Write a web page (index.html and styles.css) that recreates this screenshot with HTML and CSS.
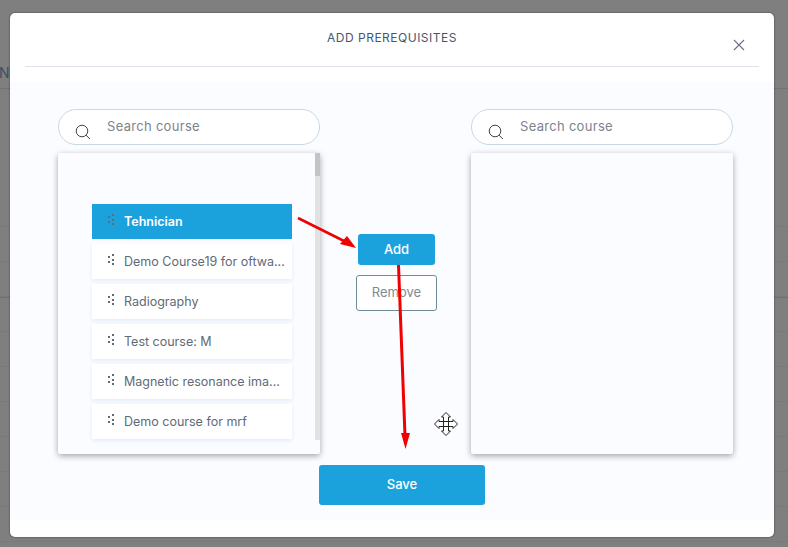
FILE: index.html
```html
<!DOCTYPE html>
<html lang="en">

<head>
    <meta charset="UTF-8">
    <meta name="viewport" content="width=device-width, initial-scale=1.0">
    <title>Add prerequisites</title>
    <link rel="stylesheet" href="styles.css">
</head>

<body>
    <!-- page behind the modal -->
    <div class="backdrop">
        <span class="backdrop-letter">N</span>
        <div class="backdrop-line line-top"></div>
        <div class="backdrop-line line-heavy"></div>
        <div class="backdrop-rows"></div>
    </div>

    <div class="modal">
        <div class="modal-header">
            <h2>ADD PREREQUISITES</h2>
            <svg class="close-icon" width="12" height="12" viewBox="0 0 12 12">
                <path d="M1 1L11 11M11 1L1 11" stroke="#6a7280" stroke-width="1.1" fill="none" />
            </svg>
        </div>

        <div class="modal-body">
            <div class="columns">
                <div class="column">
                    <div class="search">
                        <svg class="search-icon" width="16" height="16" viewBox="0 0 16 16">
                            <circle cx="7" cy="7" r="5.8" stroke="#444" stroke-width="1" fill="none" />
                            <path d="M11 11.2L15 15" stroke="#444" stroke-width="1" fill="none" />
                        </svg>
                        <span>Search course</span>
                    </div>
                    <div class="panel">
                        <div class="scrollbar"><div class="scroll-thumb"></div></div>
                        <ul class="course-list">
                            <li class="course active"><i class="grip"></i><span>Tehnician</span></li>
                            <li class="course"><i class="grip"></i><span>Demo Course19 for oftwa...</span></li>
                            <li class="course"><i class="grip"></i><span>Radiography</span></li>
                            <li class="course"><i class="grip"></i><span>Test course: M</span></li>
                            <li class="course"><i class="grip"></i><span>Magnetic resonance ima...</span></li>
                            <li class="course"><i class="grip"></i><span>Demo course for mrf</span></li>
                        </ul>
                    </div>
                </div>

                <div class="actions">
                    <button class="btn-add">Add</button>
                    <button class="btn-remove">Remove</button>
                </div>

                <div class="column">
                    <div class="search">
                        <svg class="search-icon" width="16" height="16" viewBox="0 0 16 16">
                            <circle cx="7" cy="7" r="5.8" stroke="#444" stroke-width="1" fill="none" />
                            <path d="M11 11.2L15 15" stroke="#444" stroke-width="1" fill="none" />
                        </svg>
                        <span>Search course</span>
                    </div>
                    <div class="panel"></div>
                </div>
            </div>
            <button class="btn-save">Save</button>
        </div>
    </div>

    <!-- annotation arrows drawn on top of the screenshot -->
    <svg class="annotations" width="788" height="547" viewBox="0 0 788 547">
        <path d="M298 218L346 242" stroke="#f00000" stroke-width="2.6" fill="none" />
        <path d="M356 248L340 244L347 236Z" fill="#f00000" />
        <path d="M398.5 265L405 436" stroke="#f00000" stroke-width="3" fill="none" />
        <path d="M405.5 449L401 433L410 433Z" fill="#f00000" />
    </svg>

    <!-- move cursor -->
    <svg class="move-cursor" width="24" height="24" viewBox="0 0 24 24">
        <path d="M12 .5L16.5 5H14.5V9.5H19V7.5L23.5 12L19 16.5V14.5H14.5V19H16.5L12 23.5L7.5 19H9.5V14.5H5V16.5L.5 12L5 7.5V9.5H9.5V5H7.5Z" fill="#fff" stroke="#222" stroke-width="1" />
        <path d="M9.5 5V19M14.5 5V19M5 9.5H19M5 14.5H19" stroke="#222" stroke-width="1" fill="none" />
    </svg>
</body>

</html>
```

FILE: styles.css
```css
* {
    box-sizing: border-box;
}

html,
body {
    height: 100%;
}

body {
    margin: 0;
    padding: 13px 14px 10px 10px;
    position: relative;
    overflow: hidden;
    background: #7f7f7f;
    font-family: "Inter", "Noto Sans", sans-serif;
    color: #5f6b76;
}

.backdrop-letter {
    position: absolute;
    left: -1px;
    top: 64px;
    font-size: 14px;
    color: #3c4f66;
}

.backdrop-line {
    position: absolute;
    left: 0;
    right: 0;
}

.line-top {
    top: 88px;
    height: 1px;
    background: #727272;
}

.line-heavy {
    top: 296px;
    height: 2px;
    background: #707070;
}

/* faint table rows of the page behind */
.backdrop-rows {
    position: absolute;
    left: 0;
    right: 0;
    top: 226px;
    bottom: 0;
    background: repeating-linear-gradient(to bottom, #7a7a7a 0, #7a7a7a 1px, transparent 1px, transparent 35px);
}

.modal {
    position: relative;
    width: 764px;
    height: 524px;
    background: #fff;
    border-radius: 5px;
    box-shadow: 0 0 2px rgba(0, 0, 0, 0.6);
}

.modal-header {
    height: 54px;
    margin: 0 15px;
    border-bottom: 1px solid #e2e2ec;
    display: flex;
    justify-content: center;
    padding-top: 17px;
    position: relative;
}

.modal-header h2 {
    margin: 0;
    font-size: 12px;
    font-weight: 400;
    letter-spacing: 0.5px;
    line-height: 16px;
    color: #47566e;
}

.close-icon {
    position: absolute;
    right: 14px;
    top: 26px;
}

.modal-body {
    margin-top: 15px;
    height: 438px;
    background: #fbfcff;
    padding: 27px 41px 0 48px;
}

.columns {
    display: flex;
    justify-content: space-between;
}

.column {
    width: 262px;
}

.search {
    height: 36px;
    border: 1px solid #c6d9e4;
    border-radius: 18px;
    background: #fff;
    display: flex;
    align-items: center;
    padding-left: 16px;
    font-size: 13px;
    letter-spacing: 0.3px;
    color: #7d838c;
}

.search span {
    margin-left: 16px;
    margin-bottom: 3px;
}

.search-icon {
    margin-top: 9px;
}

.panel {
    position: relative;
    margin-top: 8px;
    height: 301px;
    background: #fbfcff;
    border-radius: 2px;
    box-shadow: 0 2px 6px rgba(0, 0, 0, 0.35);
}

.scrollbar {
    position: absolute;
    top: 0;
    right: 0;
    width: 5px;
    height: 287px;
    background: #e2e2e2;
}

.scroll-thumb {
    height: 23px;
    background: #c4c4c4;
}

.course-list {
    list-style: none;
    margin: 0;
    padding: 51px 0 0 34px;
}

.course {
    width: 200px;
    height: 35px;
    margin-bottom: 5px;
    background: #fff;
    box-shadow: 0 2px 4px rgba(190, 205, 240, 0.35);
    display: flex;
    align-items: center;
    font-size: 12.5px;
    color: #5f6b76;
    padding-left: 16px;
}

.course span {
    margin-left: 14px;
    white-space: nowrap;
}

.course.active {
    background: #1ba2dd;
    box-shadow: none;
    color: #fff;
    font-weight: 600;
}

/* 5 dots of the drag handle: 2 on the left, 3 on the right */
.grip {
    display: block;
    flex: none;
    width: 2px;
    height: 2px;
    margin-top: -9px;
    background: #5f6b76;
    box-shadow: 0 5px 0 #5f6b76, 4px -2px 0 #5f6b76, 4px 3px 0 #5f6b76, 4px 7px 0 #5f6b76;
}

.actions {
    display: flex;
    flex-direction: column;
    align-items: center;
    padding: 125px 0 0 2px;
}

button {
    font-family: inherit;
    cursor: pointer;
    padding: 0 0 2px;
}

.btn-add,
.btn-save {
    background: #1ba2dd;
    color: #fff;
    border: 0;
    border-radius: 3px;
    font-weight: 500;
    font-size: 13px;
}

.btn-add {
    width: 77px;
    height: 31px;
}

.btn-remove {
    width: 81px;
    height: 36px;
    margin-top: 10px;
    background: #fff;
    color: #7f8a92;
    border: 1px solid #6f8c96;
    border-radius: 3px;
    font-size: 13px;
}

.btn-save {
    display: block;
    width: 166px;
    height: 40px;
    margin: 11px 0 0 261px;
}

.annotations {
    position: absolute;
    left: 0;
    top: 0;
}

.move-cursor {
    position: absolute;
    left: 434px;
    top: 412px;
}
```
